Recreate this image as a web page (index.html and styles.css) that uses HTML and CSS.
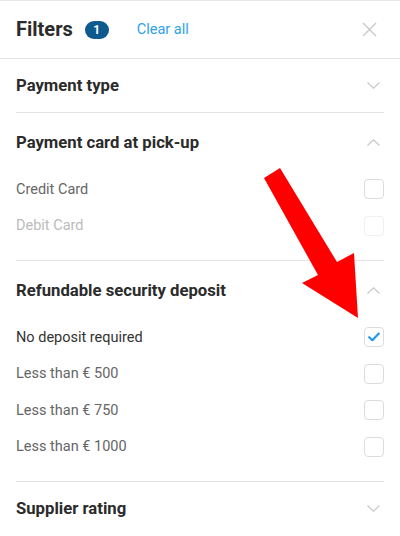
FILE: index.html
```html
<!DOCTYPE html>
<html lang="en">
<head>
  <meta charset="UTF-8" />
  <meta name="viewport" content="width=device-width, initial-scale=1" />
  <title>Filters</title>
  <link rel="stylesheet" href="styles.css">
</head>
<body>
  <div class="panel">
    <header class="head">
      <h1>Filters</h1>
      <span class="badge">1</span>
      <a class="clear" href="#">Clear all</a>
      <svg class="close" width="15" height="15" viewBox="0 0 15 15"><path d="M1 1L14 14M14 1L1 14" stroke="#c8c8c8" stroke-width="1.4" fill="none"/></svg>
    </header>

    <section class="group">
      <div class="title">
        <h2>Payment type</h2>
        <svg class="chev" width="13" height="7" viewBox="0 0 13 7"><path d="M0.5 0.5L6.5 6.2L12.5 0.5" stroke="#c8c8c8" stroke-width="1.2" fill="none"/></svg>
      </div>
    </section>

    <section class="group open">
      <div class="title">
        <h2>Payment card at pick-up</h2>
        <svg class="chev" width="13" height="7" viewBox="0 0 13 7"><path d="M0.5 6.5L6.5 0.8L12.5 6.5" stroke="#c8c8c8" stroke-width="1.2" fill="none"/></svg>
      </div>
      <ul class="opts">
        <li><span>Credit Card</span><i class="box"></i></li>
        <li class="off"><span>Debit Card</span><i class="box"></i></li>
      </ul>
    </section>

    <section class="group open">
      <div class="title">
        <h2>Refundable security deposit</h2>
        <svg class="chev" width="13" height="7" viewBox="0 0 13 7"><path d="M0.5 6.5L6.5 0.8L12.5 6.5" stroke="#c8c8c8" stroke-width="1.2" fill="none"/></svg>
      </div>
      <ul class="opts">
        <li class="on"><span>No deposit required</span><i class="box"><svg width="12" height="10" viewBox="0 0 12 10"><path d="M1.2 5.2L4.4 8.2L10.8 1.6" stroke="#2196f3" stroke-width="2.2" fill="none" stroke-linecap="round" stroke-linejoin="round"/></svg></i></li>
        <li><span>Less than € 500</span><i class="box"></i></li>
        <li><span>Less than € 750</span><i class="box"></i></li>
        <li><span>Less than € 1000</span><i class="box"></i></li>
      </ul>
    </section>

    <section class="group last">
      <div class="title">
        <h2>Supplier rating</h2>
        <svg class="chev" width="13" height="7" viewBox="0 0 13 7"><path d="M0.5 0.5L6.5 6.2L12.5 0.5" stroke="#c8c8c8" stroke-width="1.2" fill="none"/></svg>
      </div>
    </section>

    <svg class="arrow" width="400" height="536" viewBox="0 0 400 536"><polygon points="264,178 318,275 302,283 358,318 354,253 337,262 280,168" fill="#ff0000"/></svg>
  </div>
</body>
</html>
```

FILE: styles.css
```css
body { margin: 0; background: #fff; font-family: Roboto, "Liberation Sans", sans-serif; color: #333; }
.panel { position: relative; width: 400px; height: 536px; overflow: hidden; border-top: 1px solid #e6e6e6; box-sizing: border-box; }
.head { display: flex; align-items: center; height: 57px; padding: 0 16px; border-bottom: 1px solid #e3e3e3; }
.head h1 { margin: 0 0 2px; font-size: 20px; font-weight: 700; color: #2b2b2b; }
.badge { margin-left: 12px; width: 24px; height: 18px; border-radius: 9px; background: #0d5a8e; color: #fff; font-size: 12px; font-weight: 700; display: flex; align-items: center; justify-content: center; }
.clear { margin-left: 28px; color: #2ba3ea; font-size: 14.5px; text-decoration: none; }
.close { margin-left: auto; margin-right: 7px; }
.group { margin: 0 16px; border-bottom: 1px solid #e3e3e3; }
.group.last { border-bottom: none; }
.title { display: flex; align-items: center; justify-content: space-between; height: 53px; }
.open .title { height: 58px; }
.title h2 { margin: 0; font-size: 16.7px; font-weight: 700; color: #2b2b2b; }
.chev { margin-right: 4px; }
.opts { list-style: none; margin: 0; padding: 0 0 16px; }
.opts li { display: flex; align-items: center; justify-content: space-between; height: 36.5px; font-size: 14.5px; color: #666; }
.opts li.on { color: #333; }
.opts li.off { color: #bbb; }
.box { width: 18px; height: 18px; border: 1px solid #dcdcdc; border-radius: 4px; display: flex; align-items: center; justify-content: center; }
.off .box { border-color: #efefef; }
.arrow { position: absolute; left: 0; top: -1px; pointer-events: none; }
```
